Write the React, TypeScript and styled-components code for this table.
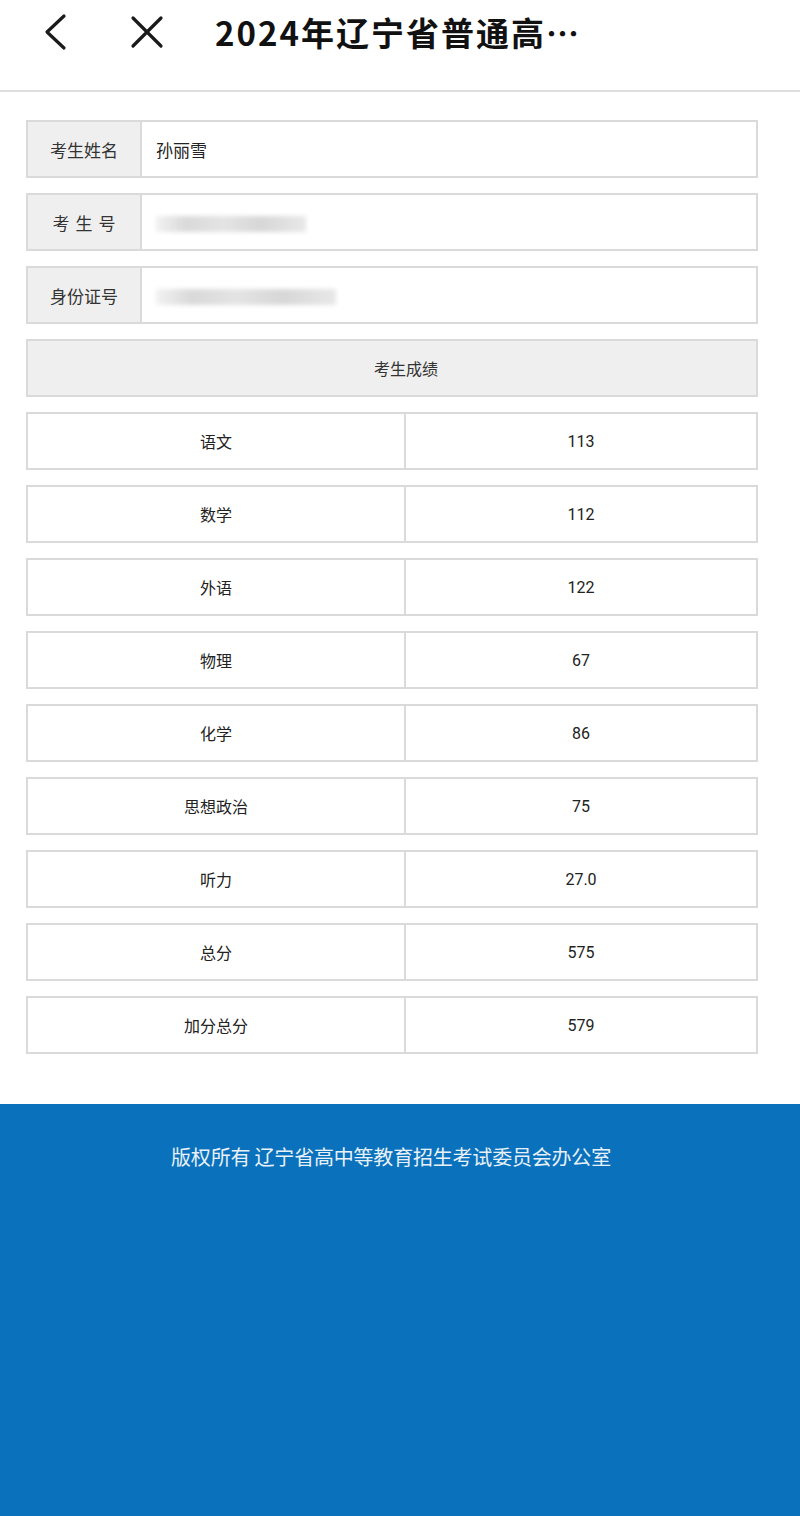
import React from "react";
import styled, { createGlobalStyle } from "styled-components";

const Global = createGlobalStyle`
  html, body { margin: 0; padding: 0; background: #ffffff; }
  body { font-family: "Noto Sans CJK SC", "Noto Sans", sans-serif; }
  #root { min-height: 1516px; display: flex; flex-direction: column; }
`;

const Page = styled.div`
  display: flex;
  flex-direction: column;
  min-height: 1516px;
`;

const Header = styled.header`
  border-bottom: 2px solid #dedede;
  display: flex;
  align-items: center;
  padding: 0 0 26px 37px;
  box-sizing: border-box;
  height: 92px;
`;

const IconButton = styled.button<{ $ml?: number }>`
  border: none;
  background: none;
  padding: 0;
  margin-left: ${(p) => p.$ml ?? 0}px;
  display: flex;
  align-items: center;
  justify-content: center;
  width: 36px;
  height: 40px;
`;

const Title = styled.h1`
  margin: 0 0 0 50px;
  font-size: 33px;
  font-weight: 700;
  color: #111;
  letter-spacing: 2px;
  font-family: "Noto Sans CJK SC", sans-serif;
  line-height: 1;
`;

const Main = styled.main`
  padding: 28px 42px 50px 26px;
  display: flex;
  flex-direction: column;
  gap: 15px;
`;

const InfoRow = styled.div`
  display: grid;
  grid-template-columns: 114px 1fr;
  height: 58px;
  border: 2px solid #dadada;
  box-sizing: border-box;
`;

const Label = styled.div<{ $spaced?: boolean }>`
  background: #efefef;
  border-right: 2px solid #dadada;
  display: flex;
  align-items: center;
  justify-content: center;
  font-size: 17px;
  color: #333;
  letter-spacing: ${(p) => (p.$spaced ? "6px" : "0")};
  padding-left: ${(p) => (p.$spaced ? "6px" : "0")};
`;

const Value = styled.div`
  display: flex;
  align-items: center;
  padding-left: 14px;
  font-size: 17px;
  color: #222;
`;

const Masked = styled.span<{ $w: number }>`
  display: block;
  width: ${(p) => p.$w}px;
  height: 16px;
  margin-top: 4px;
  background: linear-gradient(90deg, #f2f2f2 0%, #d9d9d9 20%, #e4e4e4 45%, #d7d7d7 70%, #e8e8e8 100%);
  filter: blur(2px);
`;

const SectionHead = styled.div`
  height: 58px;
  border: 2px solid #dadada;
  box-sizing: border-box;
  background: #efefef;
  display: flex;
  align-items: center;
  justify-content: center;
  padding-left: 28px;
  font-size: 16px;
  color: #333;
`;

const ScoreRow = styled.div`
  display: grid;
  grid-template-columns: 378px 1fr;
  height: 58px;
  border: 2px solid #dadada;
  box-sizing: border-box;
`;

const Cell = styled.div<{ $divider?: boolean }>`
  display: flex;
  align-items: center;
  justify-content: center;
  font-size: 16px;
  color: #222;
  border-right: ${(p) => (p.$divider ? "2px solid #dadada" : "none")};
  font-family: "Roboto", "Noto Sans CJK SC", sans-serif;
`;

const Footer = styled.footer`
  flex: 1;
  background: #0a71bc;
  display: flex;
  justify-content: center;
  padding: 37px 18px 0 0;
  box-sizing: border-box;
`;

const FooterText = styled.p`
  margin: 0;
  color: #e9f1f8;
  font-size: 20px;
  line-height: 32px;
  letter-spacing: -0.2px;
`;

const scores: [string, string][] = [
  ["语文", "113"],
  ["数学", "112"],
  ["外语", "122"],
  ["物理", "67"],
  ["化学", "86"],
  ["思想政治", "75"],
  ["听力", "27.0"],
  ["总分", "575"],
  ["加分总分", "579"],
];

export default function App() {
  return (
    <Page>
      <Global />
      <Header>
        <IconButton aria-label="back">
          <svg width="26" height="38" viewBox="0 0 26 38">
            <path d="M22 3 L5 19 L22 35" fill="none" stroke="#1a1a1a" strokeWidth="3.2" strokeLinecap="round" strokeLinejoin="round" />
          </svg>
        </IconButton>
        <IconButton aria-label="close" $ml={56}>
          <svg width="34" height="34" viewBox="0 0 34 34">
            <path d="M3 3 L31 31 M31 3 L3 31" fill="none" stroke="#1a1a1a" strokeWidth="3.2" strokeLinecap="round" />
          </svg>
        </IconButton>
        <Title>2024年辽宁省普通高…</Title>
      </Header>
      <Main>
        <InfoRow>
          <Label>考生姓名</Label>
          <Value>孙丽雪</Value>
        </InfoRow>
        <InfoRow>
          <Label $spaced>考生号</Label>
          <Value>
            <Masked $w={150} />
          </Value>
        </InfoRow>
        <InfoRow>
          <Label>身份证号</Label>
          <Value>
            <Masked $w={180} />
          </Value>
        </InfoRow>
        <SectionHead>考生成绩</SectionHead>
        {scores.map(([name, score]) => (
          <ScoreRow key={name}>
            <Cell $divider>{name}</Cell>
            <Cell>{score}</Cell>
          </ScoreRow>
        ))}
      </Main>
      <Footer>
        <FooterText>版权所有 辽宁省高中等教育招生考试委员会办公室</FooterText>
      </Footer>
    </Page>
  );
}
